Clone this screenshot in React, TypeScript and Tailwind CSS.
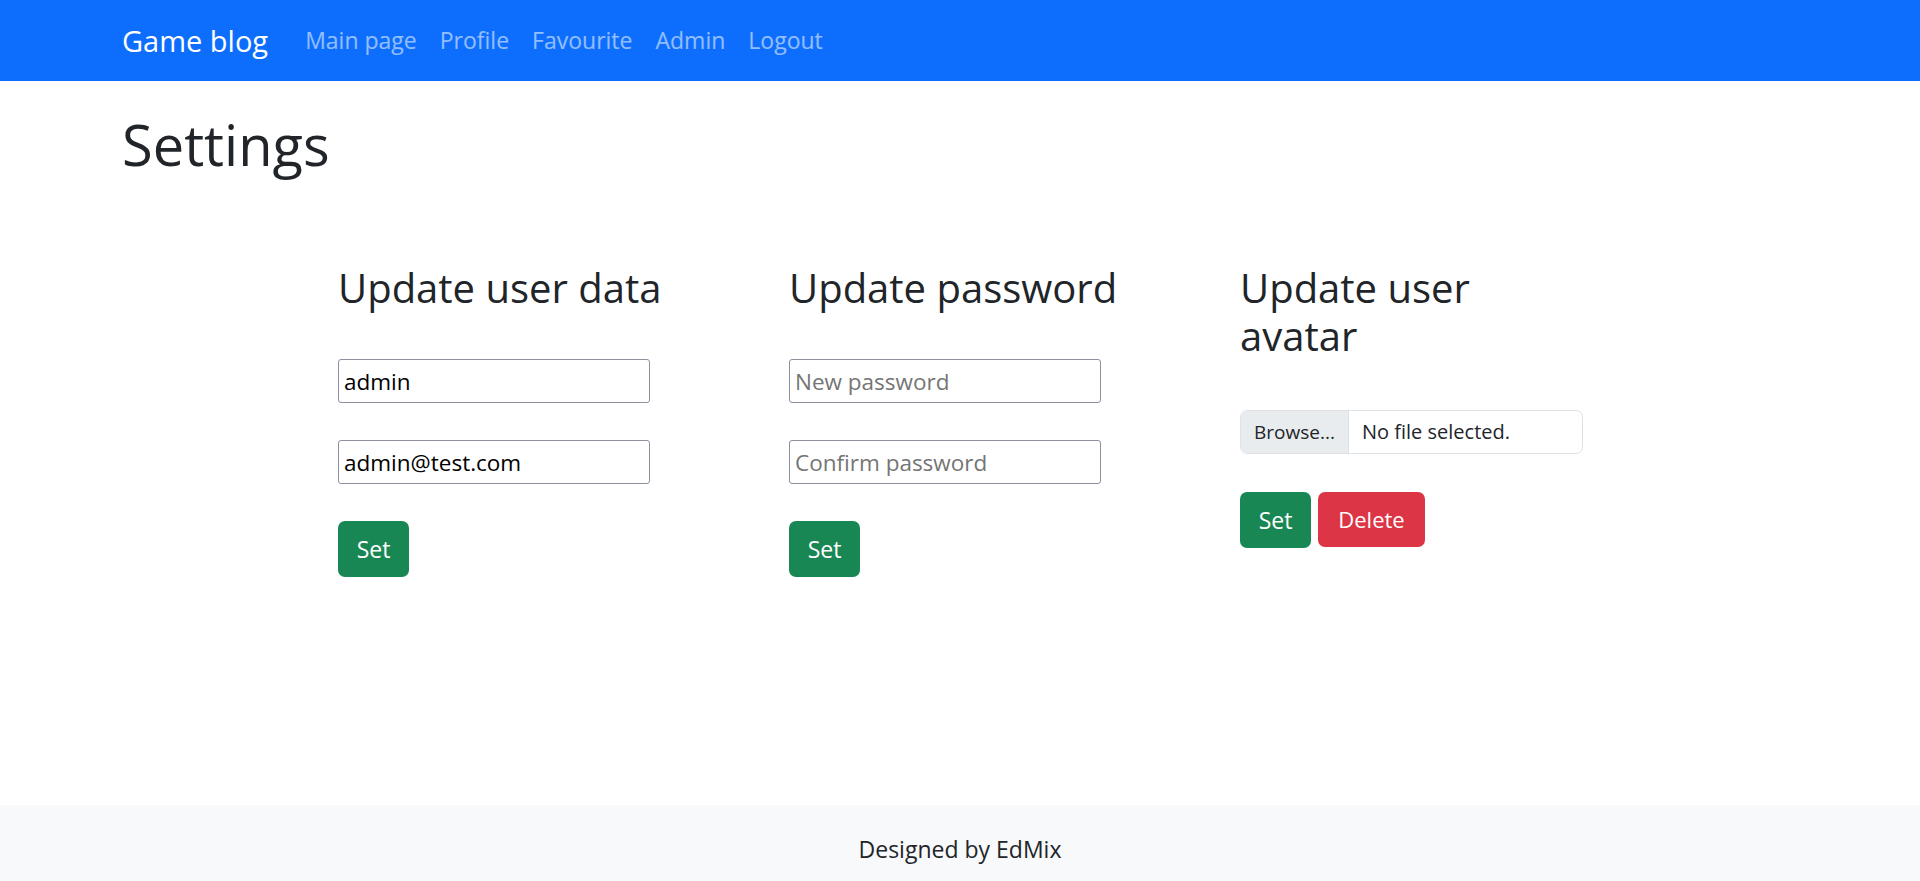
import React from 'react';

function Field({ value, placeholder }: { value?: string; placeholder?: string }) {
  return (
    <input
      type="text"
      defaultValue={value}
      placeholder={placeholder}
      className="block w-[312px] h-[44px] px-[5px] border border-[#8f8f9d] rounded-[3px] bg-white text-[22.5px] text-black placeholder:text-[#757575] outline-none"
    />
  );
}

function SetButton() {
  return (
    <button className="w-[71px] h-[56px] rounded-[7px] bg-[#198754] text-white text-[23px]">
      Set
    </button>
  );
}

export default function App() {
  return (
    <div className="min-h-[881px] flex flex-col bg-white text-[#212529] font-['Segoe_UI','Open_Sans',sans-serif]">
      <nav className="h-[81px] shrink-0 bg-[#0d6efd] flex items-center pl-[122px]">
        <span className="text-[29px] text-white mr-[37px]">Game blog</span>
        <div className="flex items-center gap-[23px] text-[23px] text-white/55">
          <span>Main page</span>
          <span>Profile</span>
          <span>Favourite</span>
          <span>Admin</span>
          <span>Logout</span>
        </div>
      </nav>

      <main className="flex-1 pl-[122px]">
        <h1 className="mt-[31px] text-[56px] leading-[64px]">Settings</h1>

        <div className="flex mt-[88px] pl-[216px]">
          <section className="w-[451px] pr-[100px]">
            <h2 className="text-[40px] leading-[48px]">Update user data</h2>
            <div className="mt-[47px] flex flex-col gap-[37px]">
              <Field value="admin" />
              <Field value="admin@test.com" />
            </div>
            <div className="mt-[37px]">
              <SetButton />
            </div>
          </section>

          <section className="w-[451px] pr-[100px]">
            <h2 className="text-[40px] leading-[48px]">Update password</h2>
            <div className="mt-[47px] flex flex-col gap-[37px]">
              <Field placeholder="New password" />
              <Field placeholder="Confirm password" />
            </div>
            <div className="mt-[37px]">
              <SetButton />
            </div>
          </section>

          <section className="w-[345px]">
            <h2 className="text-[40px] leading-[48px]">Update user avatar</h2>
            <div className="mt-[50px] w-[343px] h-[44px] flex items-stretch border border-[#dee2e6] rounded-[7px] overflow-hidden">
              <div className="w-[108px] flex items-center justify-center bg-[#e9ecef] border-r border-[#dee2e6] text-[19px]">
                Browse...
              </div>
              <div className="flex items-center pl-[13px] text-[20px]">No file selected.</div>
            </div>
            <div className="mt-[38px] flex gap-[7px]">
              <SetButton />
              <button className="w-[107px] h-[55px] rounded-[7px] bg-[#dc3545] text-white text-[22px]">
                Delete
              </button>
            </div>
          </section>
        </div>
      </main>

      <footer className="h-[76px] shrink-0 bg-[#f8f9fa] flex justify-center pt-[28px]">
        <span className="text-[23px] leading-[32px]">Designed by EdMix</span>
      </footer>
    </div>
  );
}
